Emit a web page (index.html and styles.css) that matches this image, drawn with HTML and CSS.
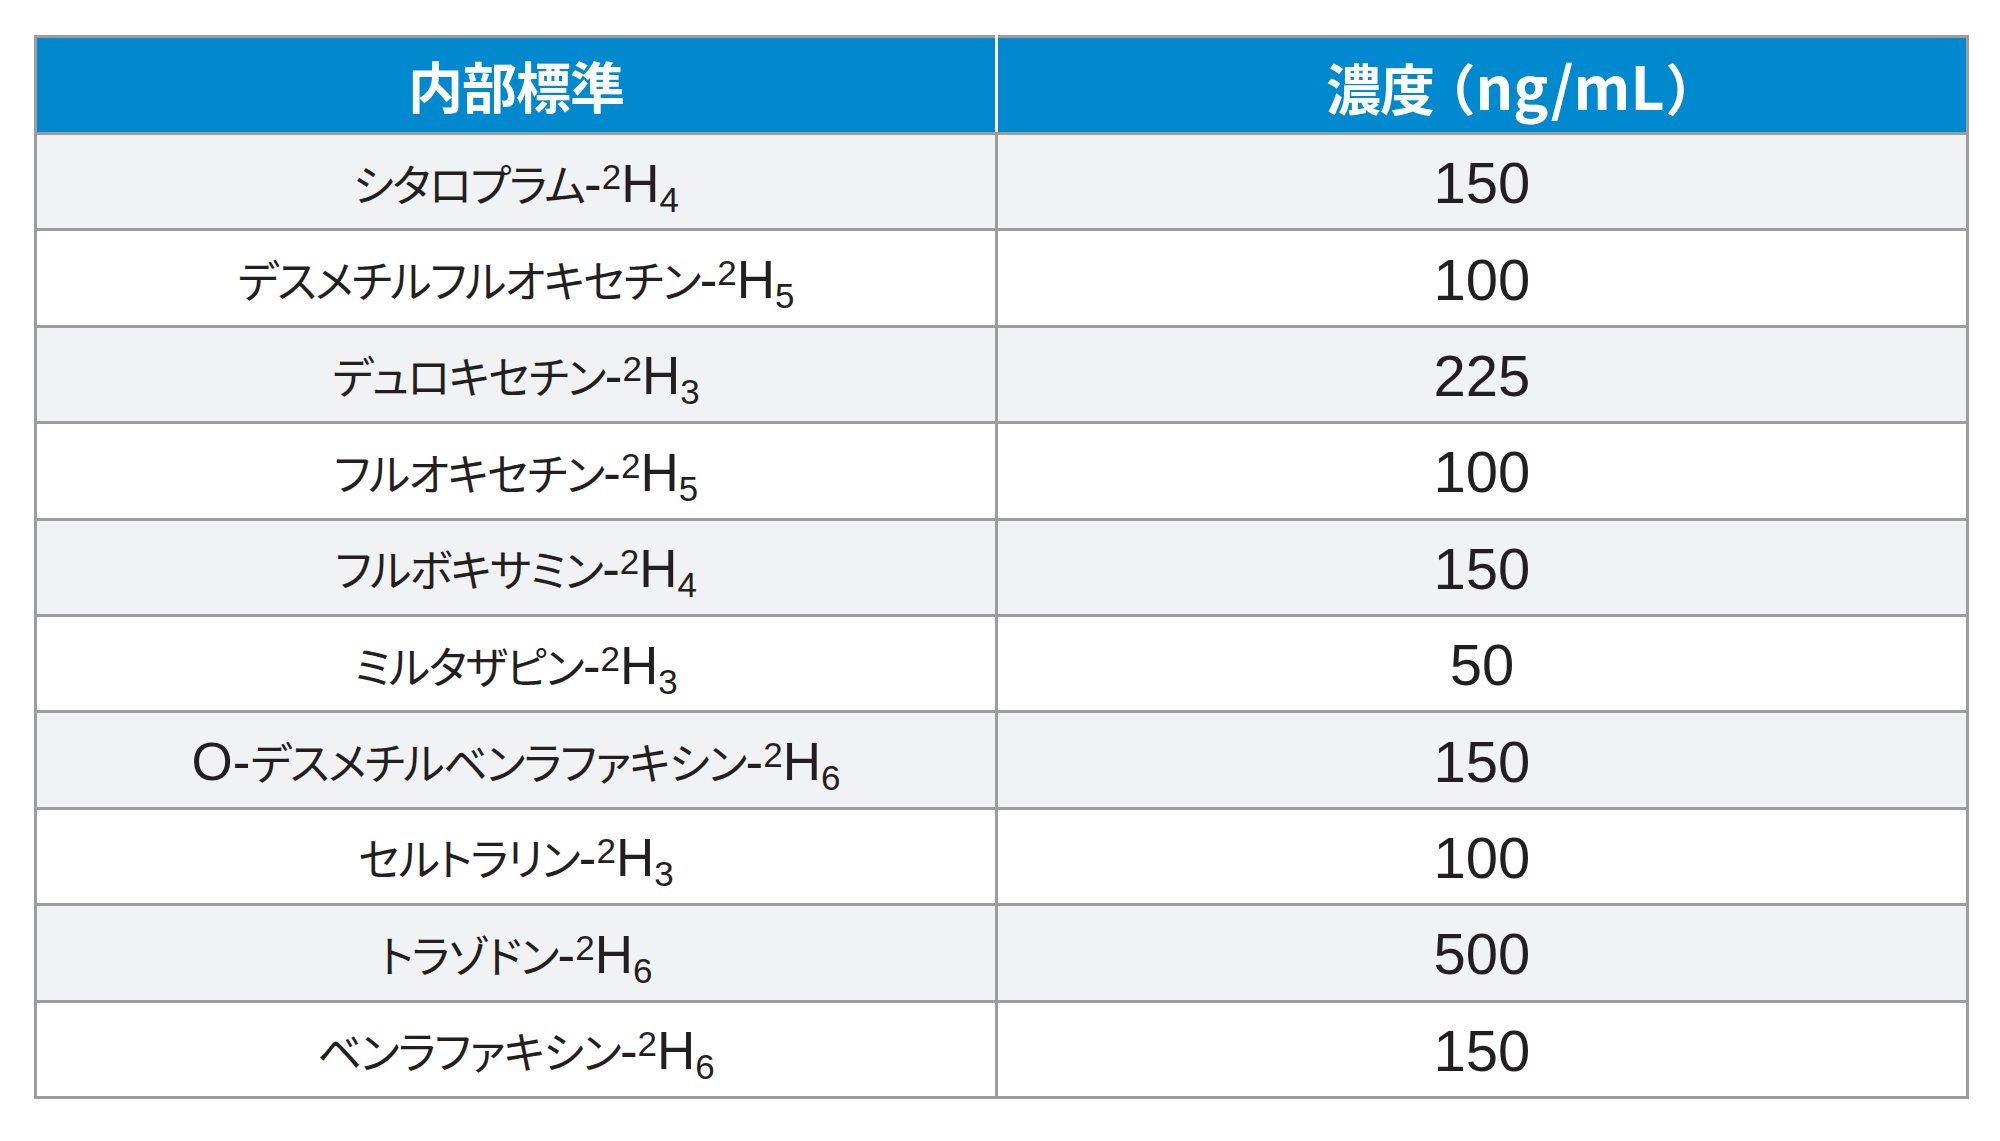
FILE: index.html
```html
<!DOCTYPE html>
<html lang="ja">
<head>
<meta charset="utf-8">
<title>内部標準</title>
<link rel="stylesheet" href="styles.css">
</head>
<body>
<div class="page">
<table class="std">
  <colgroup><col class="c1"><col class="c2"></colgroup>
  <thead>
    <tr><th>内部標準</th><th class="conc">濃度<span class="paren">（</span><span class="unit">ng/mL</span>）</th></tr>
  </thead>
  <tbody>
    <tr><td><span class="kana">シタロプラム</span>-<sup>2</sup>H<sub>4</sub></td><td class="num">150</td></tr>
    <tr><td><span class="kana">デスメチルフルオキセチン</span>-<sup>2</sup>H<sub>5</sub></td><td class="num">100</td></tr>
    <tr><td><span class="kana">デュロキセチン</span>-<sup>2</sup>H<sub>3</sub></td><td class="num">225</td></tr>
    <tr><td><span class="kana">フルオキセチン</span>-<sup>2</sup>H<sub>5</sub></td><td class="num">100</td></tr>
    <tr><td><span class="kana">フルボキサミン</span>-<sup>2</sup>H<sub>4</sub></td><td class="num">150</td></tr>
    <tr><td><span class="kana">ミルタザピン</span>-<sup>2</sup>H<sub>3</sub></td><td class="num">50</td></tr>
    <tr><td>O-<span class="kana">デスメチルベンラファキシン</span>-<sup>2</sup>H<sub>6</sub></td><td class="num">150</td></tr>
    <tr><td><span class="kana">セルトラリン</span>-<sup>2</sup>H<sub>3</sub></td><td class="num">100</td></tr>
    <tr><td><span class="kana">トラゾドン</span>-<sup>2</sup>H<sub>6</sub></td><td class="num">500</td></tr>
    <tr><td><span class="kana">ベンラファキシン</span>-<sup>2</sup>H<sub>6</sub></td><td class="num">150</td></tr>
  </tbody>
</table>
</div>
</body>
</html>
```
FILE: styles.css
```css
html, body {
  margin: 0;
  padding: 0;
  background: #ffffff;
}

.page {
  padding: 35px 0 0 34px;
}

.std {
  border-collapse: collapse;
  table-layout: fixed;
  width: 1932px;
  border: 3px solid #9c9d9f;
  font-family: "Liberation Sans", "Noto Sans CJK JP", sans-serif;
  color: #231f20;
}

.c1 { width: 961px; }
.c2 { width: 971px; }

.std th {
  background: #0089cf;
  color: #ffffff;
  font-family: "Noto Sans CJK JP", sans-serif;
  font-weight: 700;
  font-size: 55px;
  height: 92px;
  padding: 0 0 2px 0;
  text-align: center;
  vertical-align: middle;
  border-top: 3px solid #9c9d9f;
  border-bottom: 3px solid #9c9d9f;
  line-height: 1;
  letter-spacing: -1px;
}

.std th:first-child {
  border-right: 3px solid #ffffff;
}

.std th.conc {
  padding-left: 56px;
  font-feature-settings: "palt";
}

.std th.conc .paren {
  margin-left: 12px;
}

.std th.conc .unit {
  font-size: 59px;
  letter-spacing: 0;
  margin: 0 3px;
}

.std td {
  height: 90.4px;
  padding: 3px 0 0 0;
  text-align: center;
  vertical-align: middle;
  border: 3px solid #9c9d9f;
  font-size: 53px;
  line-height: 1;
  white-space: nowrap;
}

.std tbody tr:nth-child(odd) td {
  background: #f1f2f4;
}

.std tbody tr:nth-child(even) td {
  background: #ffffff;
}

.kana {
  font-family: "Noto Sans CJK JP", sans-serif;
  font-size: 44px;
  font-feature-settings: "palt";
  letter-spacing: -1.6px;
}

.std td.num {
  font-size: 58px;
}

.std sup {
  font-size: 0.66em;
  vertical-align: 0.36em;
  line-height: 0;
}

.std sub {
  font-size: 0.66em;
  vertical-align: -0.3em;
  line-height: 0;
}
```
